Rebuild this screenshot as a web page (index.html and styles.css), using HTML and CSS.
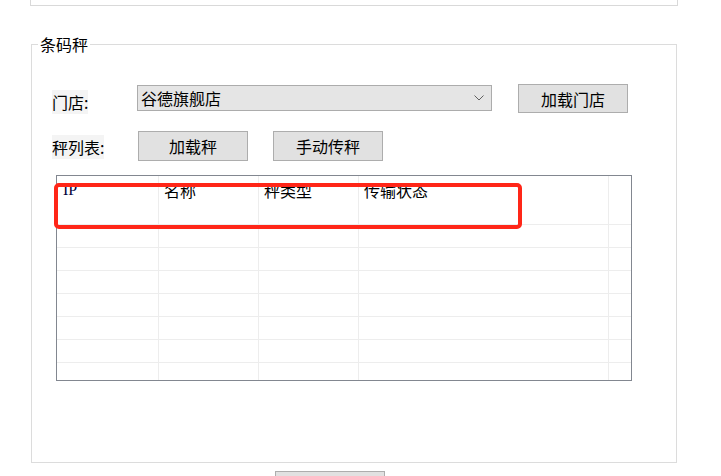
FILE: index.html
```html
<!DOCTYPE html>
<html>
<head>
    <title>条码秤</title>
    <link rel="stylesheet" href="styles.css">
</head>
<body>
    <div class="top-panel"></div>

    <fieldset class="group">
        <legend>条码秤</legend>

        <div class="form-row first-row">
            <div class="field-label"><span>门店:</span></div>
            <div class="combo">
                <span class="combo-text">谷德旗舰店</span>
                <svg class="combo-arrow" width="10" height="6" viewBox="0 0 10 6">
                    <polyline points="0.5,0.5 5,5 9.5,0.5" fill="none" stroke="#606060" stroke-width="1"/>
                </svg>
            </div>
            <button class="flat-button load-store">加载门店</button>
        </div>

        <div class="form-row second-row">
            <div class="field-label"><span>秤列表:</span></div>
            <button class="flat-button">加载秤</button>
            <button class="flat-button manual">手动传秤</button>
        </div>

        <div class="table-wrap">
            <div class="scale-table">
                <div class="cell head ip">IP</div>
                <div class="cell head">名称</div>
                <div class="cell head">秤类型</div>
                <div class="cell head">传输状态</div>
                <div class="cell head last"></div>
            </div>
            <div class="highlight"></div>
        </div>
    </fieldset>

    <button class="flat-button bottom-button"></button>

    <script>
        // fill the empty data rows of the grid
        const table = document.querySelector('.scale-table');
        for (let r = 0; r < 8; r++) {
            for (let c = 0; c < 5; c++) {
                const cell = document.createElement('div');
                cell.className = 'cell row' + (c === 4 ? ' last' : '');
                table.appendChild(cell);
            }
        }
    </script>
</body>
</html>
```

FILE: styles.css
```css
body {
    margin: 0;
    height: 476px;
    background-color: #ffffff;
    font-family: "Noto Sans CJK SC", "Noto Sans", sans-serif;
    font-size: 16px;
    color: #000000;
    overflow: hidden;
}

.top-panel {
    margin-left: 30px;
    width: 648px;
    height: 6px;
    box-sizing: border-box;
    border: 1px solid #d9d9d9;
    border-top: none;
}

.group {
    margin: 28px 0 0 31px;
    width: 646px;
    box-sizing: border-box;
    border: 1px solid #dcdcdc;
    padding: 30px 0 81px 20px;
    min-width: 0;
}

.group legend {
    margin-left: -14px;
    padding: 0 2px;
    line-height: 20px;
}

.form-row {
    display: flex;
    align-items: flex-start;
}

.field-label {
    width: 85px;
    line-height: 16px;
    margin-top: 10px;
}

.field-label span {
    background-color: #f4f4f4;
}

.second-row {
    margin-top: 18px;
}

.second-row .field-label {
    margin-top: 8px;
    width: 86px;
}

.combo {
    margin-top: 1px;
    width: 355px;
    height: 26px;
    box-sizing: border-box;
    border: 1px solid #acacac;
    background-color: #e5e5e5;
    display: flex;
    align-items: center;
    justify-content: space-between;
    padding: 0 7px 0 3px;
}

.combo-text {
    line-height: 20px;
}

.flat-button {
    width: 110px;
    height: 30px;
    box-sizing: border-box;
    border: 1px solid #adadad;
    background-color: #e1e1e1;
    font-family: "Noto Sans CJK SC", "Noto Sans", sans-serif;
    font-size: 16px;
    color: #000000;
    padding: 0;
    line-height: 20px;
}

.load-store {
    height: 29px;
    margin-left: 26px;
}

.manual {
    margin-left: 25px;
}

.table-wrap {
    position: relative;
    margin: 14px 0 0 4px;
    width: 576px;
}

.scale-table {
    height: 206px;
    box-sizing: border-box;
    border: 1px solid #828790;
    overflow: hidden;
    display: grid;
    grid-template-columns: 102px 100px 100px 250px 1fr;
    grid-auto-rows: 23px;
    grid-template-rows: 26px;
}

.cell {
    box-sizing: border-box;
    border-right: 1px solid #ededed;
}

.cell.last {
    border-right: none;
}

.cell.head {
    padding: 4px 0 0 5px;
    line-height: 20px;
}

.cell.head.ip {
    padding-left: 6px;
    font-family: "Liberation Serif", serif;
    color: #00003a;
}

.cell.row {
    border-bottom: 1px solid #ededed;
}

.highlight {
    position: absolute;
    left: -2px;
    top: 8px;
    width: 468px;
    height: 46px;
    box-sizing: border-box;
    border: 4px solid #ff2618;
    border-radius: 5px;
}

.bottom-button {
    display: block;
    margin: 8px 0 0 275px;
}
```
